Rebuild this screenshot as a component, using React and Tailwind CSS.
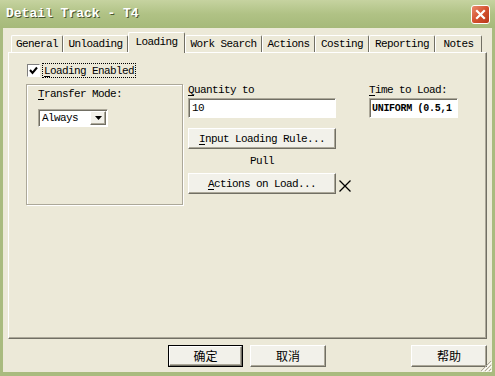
const TABS = [
  { label: 'General', w: 'w-[52px]' },
  { label: 'Unloading', w: 'w-[65px]' },
  { label: 'Loading', w: 'w-[57px]', active: true },
  { label: 'Work Search', w: 'w-[77px]' },
  { label: 'Actions', w: 'w-[53px]' },
  { label: 'Costing', w: 'w-[54px]' },
  { label: 'Reporting', w: 'w-[66px]' },
  { label: 'Notes', w: 'w-[47px]' },
]

const mono = "font-['Liberation_Mono','DejaVu_Sans_Mono',monospace] text-[11px] tracking-[-0.6px] leading-[12px] text-black"
const cjk = "font-['Noto_Sans_CJK_SC','Noto_Sans',sans-serif] text-[12px] text-black"

function Raised({ className = '', children }) {
  return (
    <div className={`flex items-center justify-center bg-[#f2f1ea] border border-t-white border-l-white border-r-[#716f64] border-b-[#716f64] shadow-[inset_-1px_-1px_0_#aca899] ${className}`}>
      {children}
    </div>
  )
}

function Sunken({ className = '', children }) {
  return (
    <div className={`flex items-center bg-white border border-t-[#aca899] border-l-[#aca899] border-r-white border-b-white shadow-[inset_1px_1px_0_#716f64] ${className}`}>
      {children}
    </div>
  )
}

function U({ children }) {
  return <span className="underline underline-offset-2">{children}</span>
}

export default function App() {
  return (
    <div className="relative w-[495px] h-[376px] flex flex-col bg-[#a9bb7f] overflow-hidden">
      <div className="h-[28px] shrink-0 flex items-center justify-between pl-[6px] pr-[5px] bg-gradient-to-b from-[#c6d3a0] via-[#b0c285] to-[#a6b97a]">
        <span className="font-['Liberation_Mono','DejaVu_Sans_Mono',monospace] font-bold text-[13px] text-white [text-shadow:1px_1px_0_#4a5530]">
          Detail Track - T4
        </span>
        <div className="w-[19px] h-[19px] rounded-[3px] border border-white bg-gradient-to-br from-[#e98a6c] via-[#d5512f] to-[#b8371a] flex items-center justify-center">
          <svg width="11" height="11" viewBox="0 0 11 11">
            <path d="M2 2 L9 9 M9 2 L2 9" stroke="white" strokeWidth="2.2" strokeLinecap="square" />
          </svg>
        </div>
      </div>

      <div className="flex-1 flex px-[3px]">
        <div className="flex-1 flex flex-col bg-[#ece9d8] pl-[5px] pr-[5px]">
          <div className="h-[24px] flex items-end pl-[3px]">
            {TABS.map(t => (
              <div
                key={t.label}
                className={`${t.w} ${mono} flex items-center justify-center border-l border-t border-r border-l-white border-t-white border-r-[#716f64] bg-[#ece9d8] rounded-t-[2px] ${t.active ? 'h-[21px] -mb-[1px] relative z-10 pb-[2px]' : 'h-[17px]'}`}
              >
                {t.label}
              </div>
            ))}
          </div>

          <div className="h-[287px] border border-t-white border-l-white border-r-[#716f64] border-b-[#716f64] shadow-[inset_-1px_-1px_0_#aca899] pl-[17px] pt-[10px]">
            <div className="flex items-center h-[15px]">
              <div className="ml-[1px] w-[13px] h-[13px] bg-white border border-t-[#808080] border-l-[#808080] border-r-white border-b-white flex items-center justify-center">
                <svg width="9" height="9" viewBox="0 0 9 9">
                  <path d="M1 4 L3.5 7 L8 1.5" stroke="black" strokeWidth="2" fill="none" />
                </svg>
              </div>
              <div className={`${mono} ml-[2px] px-[1px] h-[15px] flex items-center border border-dotted border-black`}>
                <U>L</U>oading Enabled
              </div>
            </div>

            <div className="flex mt-[6px]">
              <div className="w-[157px] h-[121px] border border-[#aca899] shadow-[inset_1px_1px_0_#fff,1px_1px_0_#fff] pl-[11px] pt-[3px]">
                <div className={`${mono} h-[12px]`}><U>T</U>ransfer Mode:</div>
                <Sunken className="mt-[9px] w-[70px] h-[18px] justify-between pl-[3px] pr-[1px]">
                  <span className={mono}>Always</span>
                  <Raised className="w-[16px] h-[14px]">
                    <svg width="7" height="4" viewBox="0 0 7 4">
                      <path d="M0 0 H7 L3.5 4 Z" fill="black" />
                    </svg>
                  </Raised>
                </Sunken>
              </div>

              <div className="w-[181px] ml-[5px]">
                <div className={`${mono} h-[14px]`}><U>Q</U>uantity to</div>
                <Sunken className="w-[148px] h-[20px] pl-[3px]">
                  <span className={mono}>10</span>
                </Sunken>
                <Raised className={`${mono} mt-[10px] w-[148px] h-[21px]`}>
                  <span><U>I</U>nput Loading Rule...</span>
                </Raised>
                <div className={`${mono} w-[148px] h-[24px] flex items-center justify-center`}>Pull</div>
                <div className="flex items-end">
                  <Raised className={`${mono} w-[148px] h-[21px] shrink-0`}>
                    <span><U>A</U>ctions on Load...</span>
                  </Raised>
                  <svg className="ml-[3px] mb-[2px]" width="12" height="12" viewBox="0 0 12 12">
                    <path d="M0.5 0.5 L11.5 11.5 M11.5 0.5 L0.5 11.5" stroke="black" strokeWidth="1.3" />
                  </svg>
                </div>
              </div>

              <div className="w-[89px]">
                <div className={`${mono} h-[14px]`}><U>T</U>ime to Load:</div>
                <Sunken className="w-[89px] h-[20px] pl-[2px]">
                  <span className="font-['Liberation_Mono','DejaVu_Sans_Mono',monospace] text-[10px] font-bold tracking-[-0.3px] text-black whitespace-nowrap">
                    UNIFORM (0.5,1
                  </span>
                </Sunken>
              </div>
            </div>
          </div>

          <div className="flex mt-[6px] h-[22px]">
            <div className="ml-[160px] w-[75px] h-[22px] border border-black">
              <Raised className={`${cjk} w-full h-full`}>确定</Raised>
            </div>
            <Raised className={`${cjk} ml-[7px] w-[76px] h-[22px]`}>取消</Raised>
            <Raised className={`${cjk} ml-[85px] w-[76px] h-[22px]`}>帮助</Raised>
          </div>
        </div>
      </div>
      <div className="h-[4px] shrink-0" />

      <svg className="absolute right-[3px] bottom-[4px]" width="12" height="12" viewBox="0 0 12 12">
        <path d="M11 1 L1 11 M11 5 L5 11 M11 9 L9 11" stroke="#aca899" strokeWidth="1" />
        <path d="M12 2 L2 12 M12 6 L6 12 M12 10 L10 12" stroke="white" strokeWidth="1" />
      </svg>
    </div>
  )
}
